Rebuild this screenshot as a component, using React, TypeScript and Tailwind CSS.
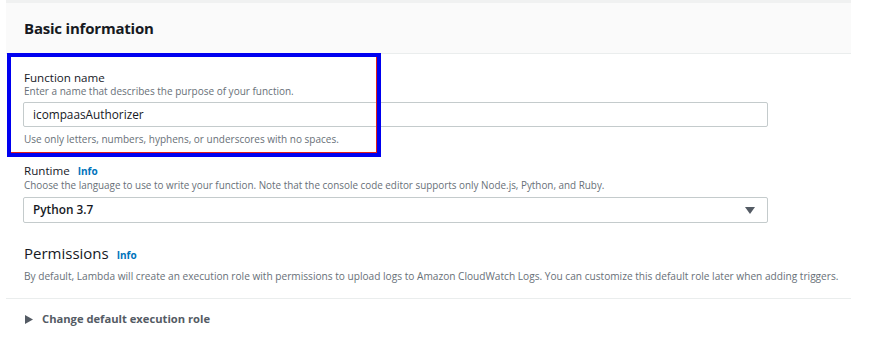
const Info = ({ gap = "ml-2" }: { gap?: string }) => (
  <span className={`${gap} text-[10px] font-bold text-[#0073bb]`}>Info</span>
);

export default function App() {
  return (
    <div className="relative w-[879px] h-[350px] bg-white font-['Open_Sans',sans-serif] text-[#16191f] overflow-hidden">
      <div className="ml-[6px] w-[845px]">
        <div className="h-[3px] bg-[#f0f1f1]" />
        <div className="h-[51px] bg-[#fafafa] border-b border-[#eaeded] pl-[18px] flex items-center">
          <h2 className="text-[15px] font-bold tracking-[-0.2px]">Basic information</h2>
        </div>

        <div className="ml-[18px]">
          <div className="mt-[17px] text-[11.6px] leading-[14px]">Function name</div>
          <div className="text-[10px] leading-[13px] text-[#687078]">
            Enter a name that describes the purpose of your function.
          </div>
          <div className="mt-[4px] -ml-[1px] w-[745px] h-[25px] border border-[#c4cbcc] rounded-[2px] bg-white flex items-center pl-[9px] text-[11.8px]">
            icompaasAuthorizer
          </div>
          <div className="mt-[6px] text-[10px] leading-[13px] text-[#687078]">
            Use only letters, numbers, hyphens, or underscores with no spaces.
          </div>

          <div className="mt-[18px] text-[11.6px] leading-[14px] flex items-baseline">
            Runtime <Info />
          </div>
          <div className="mt-[1px] text-[9.9px] leading-[13px] text-[#687078]">
            Choose the language to use to write your function. Note that the console code editor supports only Node.js, Python, and Ruby.
          </div>
          <div className="mt-[5px] -ml-[1px] w-[745px] h-[26px] border border-[#c4cbcc] rounded-[2px] flex items-center justify-between pl-[9px] pr-[12px]">
            <span className="text-[11.8px] font-semibold">Python 3.7</span>
            <svg width="10" height="7" viewBox="0 0 10 7">
              <path d="M0 0 L10 0 L5 7 Z" fill="#545b64" />
            </svg>
          </div>

          <div className="mt-[20px] flex items-baseline">
            <span className="text-[15px] leading-[20px]">Permissions</span>
            <Info />
          </div>
          <div className="mt-[7px] text-[10.15px] leading-[13px] text-[#687078] whitespace-nowrap">
            By default, Lambda will create an execution role with permissions to upload logs to Amazon CloudWatch Logs. You can customize this default role later when adding triggers.
          </div>
        </div>

        <div className="mt-[15px] border-t border-[#eaeded]" />

        <div className="ml-[19px] mt-[13px] flex items-center gap-[9px] text-[#545b64]">
          <svg width="8" height="9" viewBox="0 0 8 9">
            <path d="M0 0 L8 4.5 L0 9 Z" fill="#545b64" />
          </svg>
          <span className="text-[11.2px] leading-[14px] font-bold">Change default execution role</span>
        </div>
      </div>

      {/* highlight annotation drawn over the form */}
      <div className="absolute left-[7px] top-[53px] w-[374px] h-[104px] border-[4px] border-[#0000f0] pointer-events-none">
        <div className="h-full w-full border-r border-b border-[#e0201a]" />
      </div>
    </div>
  );
}
